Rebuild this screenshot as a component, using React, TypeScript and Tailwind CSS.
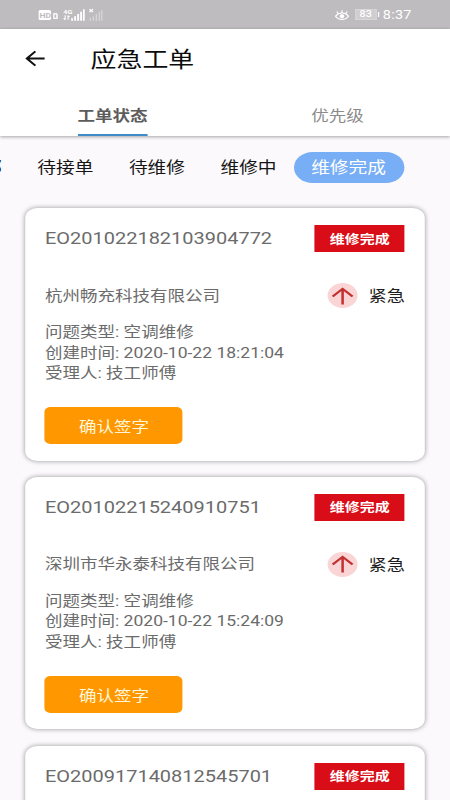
import clsx from 'clsx';

type Order = {
  id: string;
  company: string;
  problem: string;
  createdAt: string;
  handler: string;
};

const FILTERS = ['全部', '待接单', '待维修', '维修中', '维修完成'];

const ORDERS: Order[] = [
  {
    id: 'EO201022182103904772',
    company: '杭州畅充科技有限公司',
    problem: '空调维修',
    createdAt: '2020-10-22 18:21:04',
    handler: '技工师傅',
  },
  {
    id: 'EO20102215240910751',
    company: '深圳市华永泰科技有限公司',
    problem: '空调维修',
    createdAt: '2020-10-22 15:24:09',
    handler: '技工师傅',
  },
  {
    id: 'EO200917140812545701',
    company: '杭州畅充科技有限公司',
    problem: '空调维修',
    createdAt: '2020-09-17 14:08:12',
    handler: '技工师傅',
  },
];

function StatusBar() {
  return (
    <div className="flex h-[29px] shrink-0 items-center justify-between bg-[#bfbcbf] pr-[32px] pl-[32px] text-white">
      <svg width="56" height="14" viewBox="0 0 56 14" fill="currentColor">
        <rect x="0" y="2" width="10.5" height="10" rx="1.5" />
        <text x="1" y="9.8" fontSize="7" fontWeight="700" fill="#bfbcbf" fontFamily="Roboto">
          HD
        </text>
        <path d="M12.3 5h2.9l1 1.2V11h-3.9zM13.5 6.5v3.2h1.3V6.5z" fillRule="evenodd" opacity=".9" />
        <text x="20.8" y="6" fontSize="6" fontWeight="700" fontFamily="Roboto">
          4G
        </text>
        <path d="M22.3 7.2v4.6M21 10.4l1.3 1.4M24.7 11.8V7.4M24.7 7.6l1.2 1.4" stroke="currentColor" strokeWidth=".9" />
        <path d="M27.3 10.300h1.500v2.500h-1.500zM29.800 8.300h1.600v4.500h-1.600zM32.300 6h1.600v6.800h-1.600zM34.800 3.800h1.600v9h-1.600zM37.200 1.300h1.400v11.500h-1.400z" />
        <path d="m42.5 1.2 3 3m0-3-3 3" stroke="currentColor" strokeWidth="1.2" />
        <path
          d="M42.7 10h1.1v2.800h-1.1zM45.2 8.500h1.1v4.300h-1.1zM47.7 6h1.1v6.800h-1.1zM50.2 4h1.1v8.800h-1.1zM52.3 2h1.1v10.800h-1.1z"
          opacity=".4"
        />
      </svg>
      <div className="flex items-center">
        <svg width="12" height="12" viewBox="0 0 12 12" fill="none" stroke="currentColor">
          <path d="M.6 7.2C2 5 4 4 6 4s4 1 5.4 3.2C10 9.5 8 10.4 6 10.4S2 9.5.6 7.2Z" strokeWidth="1.1" />
          <circle cx="6" cy="7.2" r="1.5" fill="currentColor" />
          <path d="M6 4V1.2M3 4.7 1.7 2.5M9 4.7l1.3-2.2" strokeWidth="1" />
        </svg>
        <div className="ml-[5px] flex h-[11px] w-[17.5px] items-center justify-center border border-[#d8d6d8] bg-[#cfcdcf] text-[9px] leading-none font-medium">
          83
        </div>
        <div className="ml-[1px] h-[5px] w-[1.5px] bg-white" />
        <span className="ml-[3px] text-[12px] leading-none tracking-[0.2px]">8:37</span>
      </div>
    </div>
  );
}

function Header() {
  return (
    <header className="relative z-10 flex h-[107px] shrink-0 flex-col bg-white shadow-[0_1px_3px_rgba(0,0,0,0.35)]">
      <div className="flex h-[59px] items-center">
        <svg
          className="ml-[21px]"
          width="17"
          height="17"
          viewBox="0 0 17 17"
          fill="none"
          stroke="#111"
          strokeWidth="1.8"
        >
          <path d="M16.2 8.5H1.3M8.5 1.3 1.3 8.5l7.2 7.2" />
        </svg>
        <h1 className="ml-[37.5px] pt-[2px] text-[21.6px] leading-none text-[#0c0c0c]">应急工单</h1>
      </div>
      <div className="flex flex-1 text-[14.6px]">
        <div className="flex flex-1 justify-center">
          <div className="flex h-full items-center border-b-[2.5px] border-[#3f8cc8] pt-[12px] font-bold text-[#5c5c5c]">
            工单状态
          </div>
        </div>
        <div className="flex flex-1 items-center justify-center pt-[10px] text-[#8b8b8b]">优先级</div>
      </div>
    </header>
  );
}

function FilterBar() {
  return (
    <div className="flex h-[62px] shrink-0 items-center justify-end pr-[38.5px] text-[15.6px] text-[#151515]">
      {FILTERS.map((label, i) => (
        <div
          key={label}
          className={clsx(
            'shrink-0 whitespace-nowrap',
            i === FILTERS.length - 1
              ? 'ml-[14px] flex h-[31px] w-[92px] items-center justify-center rounded-full bg-[#78aef5] pt-[3px] text-white'
              : 'ml-[29.5px] pt-[4px]',
          )}
        >
          {label}
        </div>
      ))}
    </div>
  );
}

function OrderCard({ order }: { order: Order }) {
  return (
    <article className="flex h-[252.5px] shrink-0 flex-col rounded-[10px] bg-white pr-[16.8px] pl-[16.7px] pt-[17px] text-[#6b6b6b] shadow-[0_0_5px_rgba(0,0,0,0.4)]">
      <div className="flex h-[27px] items-center justify-between">
        <span className="pt-[2px] text-[16.65px] leading-none">{order.id}</span>
        <span className="flex h-[27px] w-[75px] items-center justify-center bg-[#d90d18] pt-[3px] text-[12.5px] font-bold text-white">
          维修完成
        </span>
      </div>
      <div className="mt-[31px] flex h-[25px] items-center justify-between text-[14.6px]">
        <span className="pt-[2px]">{order.company}</span>
        <div className="flex items-center">
          <span className="flex h-[25px] w-[25px] items-center justify-center rounded-full bg-[#fad5d6]">
            <svg width="19" height="18" viewBox="0 0 19 18" fill="none" stroke="#c23030" strokeWidth="2.1">
              <path d="M9.5 17.5V1.8M1.2 9.4l8.300-7.600 8.300 7.600" />
            </svg>
          </span>
          <span className="ml-[9px] pt-[2px] text-[15.2px] text-[#1d1d22]">紧急</span>
        </div>
      </div>
      <div className="mt-[14px] text-[14.6px] leading-[20.6px]">
        <p>问题类型: {order.problem}</p>
        <p>创建时间: {order.createdAt}</p>
        <p>受理人: {order.handler}</p>
      </div>
      <button className="mt-[23px] flex h-[37px] w-[115px] shrink-0 items-center justify-center rounded-[5px] bg-[#ff9800] pt-[5px] text-[14.6px] text-[#fff6dc]">
        确认签字
      </button>
    </article>
  );
}

// The screen is laid out 375px wide and stretched to fill the 450px viewport.
export default function App() {
  return (
    <div className="h-[800px] w-[450px] overflow-hidden bg-[#fbf9fc]">
      <div className="flex h-[800px] w-[375px] origin-top-left scale-x-[1.2] flex-col overflow-hidden bg-[#fbf9fc] font-['Roboto','Noto_Sans_CJK_SC',sans-serif]">
        <StatusBar />
        <Header />
        <FilterBar />
        <main className="flex flex-col gap-[16.3px] px-[20.8px] pt-[10px]">
          {ORDERS.map((order) => (
            <OrderCard key={order.id} order={order} />
          ))}
        </main>
      </div>
    </div>
  );
}
